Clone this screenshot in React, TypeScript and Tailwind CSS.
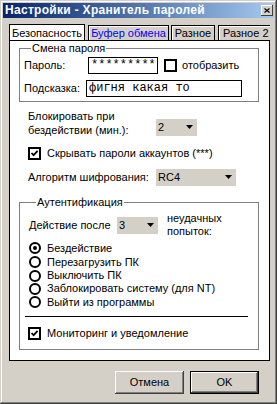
import type { ReactNode } from "react";

// Classic Win2000-style settings dialog: one tab page, two group boxes, OK/Cancel.

function CheckBox({ checked }: { checked?: boolean }) {
  return (
    <span className="flex h-[13px] w-[13px] shrink-0 items-center justify-center border-2 border-black bg-white">
      {checked && (
        <svg width="9" height="9" viewBox="0 0 9 9">
          <path d="M1.5 4 L3.6 6.2 L7.6 1.8" fill="none" stroke="black" strokeWidth="1.8" />
        </svg>
      )}
    </span>
  );
}

function Radio({ checked }: { checked?: boolean }) {
  return (
    <span className="flex h-[12px] w-[12px] shrink-0 items-center justify-center rounded-full border-2 border-black bg-white">
      {checked && <span className="h-[4px] w-[4px] rounded-full bg-black" />}
    </span>
  );
}

function Combo({ value, width }: { value: string; width: string }) {
  return (
    <div className={`flex h-[19px] ${width} shrink-0 items-center justify-between border border-white bg-[#d4d0c8] pl-[2px] pr-[2px]`}>
      <span>{value}</span>
      <svg width="9" height="5" viewBox="0 0 9 5" className="mr-[1px]">
        <path d="M1 0 H8 L4.5 4 Z" fill="black" />
      </svg>
    </div>
  );
}

function Group({ title, children, className }: { title: string; children: ReactNode; className: string }) {
  return (
    <fieldset className={`w-[240px] border border-[#808080] ${className}`}>
      <legend className="ml-[7px] px-[1px] leading-[13px]">{title}</legend>
      {children}
    </fieldset>
  );
}

const radios = [
  { label: "Бездействие", h: "h-[14px]", checked: true },
  { label: "Перезагрузить ПК", h: "h-[14px]" },
  { label: "Выключить ПК", h: "h-[13px]" },
  { label: "Заблокировать систему (для NT)", h: "h-[13px]" },
  { label: "Выйти из программы", h: "h-[14px]" },
];

export default function App() {
  return (
    <div className="flex h-[404px] w-[277px] flex-col bg-[#d4d0c8] p-[3px] font-['Liberation_Sans',Arial,sans-serif] text-[11px] leading-[13px] text-black shadow-[inset_-1px_-1px_#404040,inset_1px_1px_#d4d0c8,inset_-2px_-2px_#808080,inset_2px_2px_#ffffff]">
      {/* title bar */}
      <div className="flex h-[15px] items-center justify-between bg-gradient-to-r from-[#0a246a] to-[#a6caf0] pl-[2px] pr-[1px]">
        <span className="text-[12px] font-bold tracking-[0.3px] text-white">Настройки - Хранитель паролей</span>
        <span className="flex h-[11px] w-[12px] items-center justify-center bg-[#d4d0c8] shadow-[inset_-1px_-1px_#404040,inset_1px_1px_#ffffff]">
          <svg width="6" height="5" viewBox="0 0 6 5">
            <path d="M0.5 0.5 L5.5 4.5 M5.5 0.5 L0.5 4.5" stroke="black" strokeWidth="1.1" />
          </svg>
        </span>
      </div>

      <div className="ml-[6px] mt-[6px] w-[261px]">
        {/* tabs */}
        <div className="flex h-[16px] items-end overflow-hidden">
          <div className="relative z-10 -mb-px flex h-[17px] w-[76px] shrink-0 items-center justify-center border-x border-t border-black bg-white">
            Безопасность
          </div>
          <div className="ml-[3px] flex h-[15px] w-[81px] shrink-0 items-center justify-center border-x border-t border-black text-[#0000ff] shadow-[inset_1px_1px_#ffffff]">
            Буфер обмена
          </div>
          <div className="ml-[2px] flex h-[15px] w-[44px] shrink-0 items-center justify-center border-x border-t border-black shadow-[inset_1px_1px_#ffffff]">
            Разное
          </div>
          <div className="ml-[3px] flex h-[15px] w-[60px] shrink-0 items-center border-x border-t border-black pl-[4px] shadow-[inset_1px_1px_#ffffff]">
            Разное 2
          </div>
        </div>

        {/* page */}
        <div className="h-[321px] border border-black bg-white px-[9px]">
          <Group title="Смена пароля" className="mt-[1px] pb-[4px] pl-[4px]">
            <div className="mt-[2px] flex h-[17px] items-center">
              <span className="w-[64px]">Пароль:</span>
              <div className="flex h-[17px] w-[70px] items-center border border-black pl-[2px] font-['Liberation_Mono',monospace] text-[12px]">
                *********
              </div>
              <span className="ml-[6px]">
                <CheckBox />
              </span>
              <span className="ml-[5px]">отобразить</span>
            </div>
            <div className="mt-[6px] flex h-[17px] items-center">
              <span className="w-[62px]">Подсказка:</span>
              <div className="flex h-[17px] w-[156px] items-center border border-black pl-[2px] font-['Liberation_Mono',monospace] text-[12px]">
                фигня какая то
              </div>
            </div>
          </Group>

          <div className="pl-[9px]">
            <div className="mt-[7px] flex items-start">
              <div className="w-[127px] leading-[14px]">
                Блокировать при
                <br />
                бездействии (мин.):
              </div>
              <div className="mt-[9px]">
                <Combo value="2" width="w-[43px]" />
              </div>
            </div>
            <div className="mt-[10px] flex items-center">
              <CheckBox checked />
              <span className="ml-[6px]">Скрывать пароли аккаунтов (***)</span>
            </div>
            <div className="mt-[8px] flex items-center">
              <span className="w-[127px]">Алгоритм шифрования:</span>
              <Combo value="RC4" width="w-[82px]" />
            </div>
          </div>

          <Group title="Аутентификация" className="mt-[9px] pb-[9px] pl-[9px]">
            <div className="mt-[3px] flex h-[26px] items-center">
              <span className="w-[87px]">Действие после</span>
              <Combo value="3" width="w-[43px]" />
              <span className="ml-[8px]">
                неудачных
                <br />
                попыток:
              </span>
            </div>
            <div className="mt-[3px]">
              {radios.map((r) => (
                <div key={r.label} className={`flex items-center ${r.h}`}>
                  <Radio checked={r.checked} />
                  <span className="ml-[6px]">{r.label}</span>
                </div>
              ))}
            </div>
            <div className="-ml-[4px] mt-[7px] h-px w-[223px] bg-black" />
            <div className="-ml-[1px] mt-[10px] flex items-center">
              <CheckBox checked />
              <span className="ml-[6px]">Мониторинг и уведомление</span>
            </div>
          </Group>
        </div>
      </div>

      {/* buttons */}
      <div className="mt-[10px] flex pl-[112px]">
        <button className="flex h-[23px] w-[69px] items-center justify-center bg-[#d4d0c8] shadow-[inset_-1px_-1px_#404040,inset_1px_1px_#ffffff,inset_-2px_-2px_#808080]">
          Отмена
        </button>
        <button className="ml-[6px] flex h-[23px] w-[69px] items-center justify-center border border-black bg-[#d4d0c8] shadow-[inset_-1px_-1px_#404040,inset_1px_1px_#ffffff,inset_-2px_-2px_#808080]">
          OK
        </button>
      </div>
    </div>
  );
}
